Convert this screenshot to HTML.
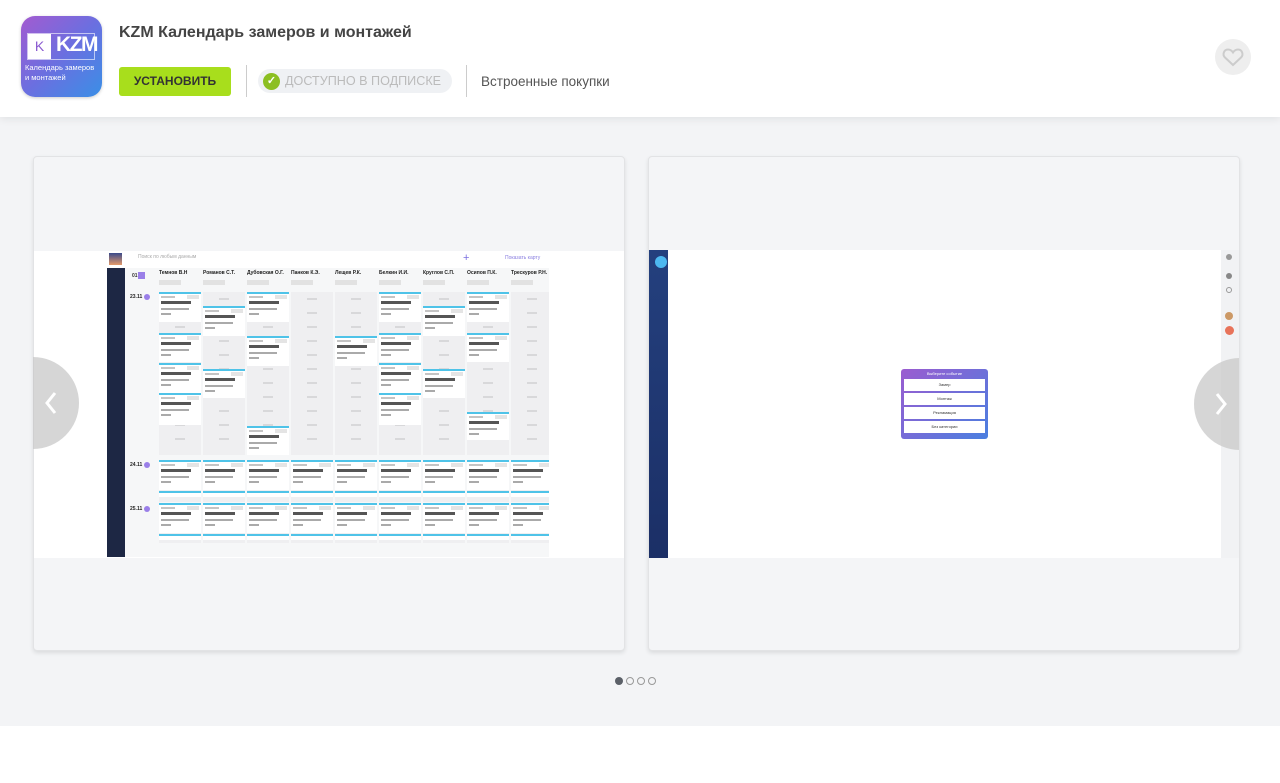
<!DOCTYPE html>
<html><head><meta charset="utf-8">
<style>
*{box-sizing:border-box;margin:0;padding:0}
body{width:1280px;height:783px;position:relative;background:#fff;font-family:"Liberation Sans",sans-serif;overflow:hidden}
.a{position:absolute}
#hdr{left:0;top:0;width:1280px;height:117px;background:#fff;box-shadow:0 2px 8px rgba(0,0,0,.08);z-index:2}
#gray{left:0;top:117px;width:1280px;height:609px;background:#f3f4f6}
.card{background:#f4f5f7;border:1px solid #e2e3e5;border-radius:4px;box-shadow:0 2px 4px rgba(0,0,0,.1);overflow:hidden}
.t{font-size:4px;color:#333;white-space:nowrap}
#cal{position:absolute;left:0;top:0;width:549px;height:783px;overflow:hidden}
</style></head><body>
<div id="gray" class="a"></div>
<div id="hdr" class="a">
  <div class="a" style="left:21px;top:16px;width:81px;height:81px;border-radius:14px;background:linear-gradient(135deg,#a35bd0,#6b6fe0 50%,#3a8fe6);box-shadow:0 1px 3px rgba(0,0,0,.2);overflow:hidden">
    <div class="a" style="left:6px;top:17px;width:68px;height:27px;border:1px solid rgba(255,255,255,.6)"></div>
    <div class="a" style="left:7px;top:18px;width:23px;height:25px;background:#fff;color:#8a5ad0;font-size:14px;text-align:center;line-height:25px">K</div>
    <div class="a" style="left:35px;top:17px;color:#fff;font-size:21px;font-weight:bold;letter-spacing:-1.5px">KZM</div>
    <div class="a" style="left:4px;top:47px;color:#fff;font-size:7.5px;line-height:10px">Календарь замеров<br>и монтажей</div>
  </div>
  <div class="a" style="left:119px;top:24px;font-size:16px;font-weight:bold;color:#444">KZM Календарь замеров и монтажей</div>
  <div class="a" style="left:119px;top:67px;width:112px;height:29px;background:#a8de1c;border-radius:3px;color:#333;font-size:12px;font-weight:bold;text-align:center;line-height:29px">УСТАНОВИТЬ</div>
  <div class="a" style="left:246px;top:65px;width:1px;height:32px;background:#ccc"></div>
  <div class="a" style="left:258px;top:69px;width:194px;height:24px;background:#eff1f4;border-radius:12px"></div>
  <div class="a" style="left:263px;top:73px;width:17px;height:17px;border-radius:50%;background:#8cbf22;color:#fff;font-size:11px;text-align:center;line-height:17px;font-weight:bold">✓</div>
  <div class="a" style="left:285px;top:74px;font-size:12.6px;color:#bbb">ДОСТУПНО В ПОДПИСКЕ</div>
  <div class="a" style="left:466px;top:65px;width:1px;height:32px;background:#ccc"></div>
  <div class="a" style="left:481px;top:74px;font-size:13.5px;color:#555">Встроенные покупки</div>
  <div class="a" style="left:1215px;top:39px;width:36px;height:36px;border-radius:50%;background:#eee">
    <svg width="36" height="36" viewBox="0 0 36 36"><path d="M18 26 L10 18.5 C7 15.5 9 10.5 13 10.5 C15.5 10.5 17 12 18 13.5 C19 12 20.5 10.5 23 10.5 C27 10.5 29 15.5 26 18.5 Z" fill="none" stroke="#ccc" stroke-width="2"/></svg>
  </div>
</div>

<div class="a card" style="left:33px;top:156px;width:592px;height:495px">
  <div class="a" style="left:0;top:94px;width:592px;height:307px;background:#fff"></div>
</div>
<div class="a card" style="left:648px;top:156px;width:592px;height:495px">
  <div class="a" style="left:0;top:93px;width:592px;height:308px;background:#fff"></div>
  <div class="a" style="left:0;top:93px;width:19px;height:308px;background:linear-gradient(#24407e,#1b2f66)"></div>
  <div class="a" style="left:6px;top:99px;width:12px;height:12px;border-radius:50%;background:#4db8f0"></div>
  <div class="a" style="left:572px;top:93px;width:20px;height:308px;background:#f1f2f4"></div>
  <div class="a" style="left:577px;top:97px;width:6px;height:6px;border-radius:50%;background:#999"></div>
  <div class="a" style="left:577px;top:116px;width:6px;height:6px;border-radius:50%;background:#888"></div>
  <div class="a" style="left:577px;top:130px;width:6px;height:6px;border-radius:50%;border:1px solid #999"></div>
  <div class="a" style="left:576px;top:155px;width:8px;height:8px;border-radius:50%;background:#c96"></div>
  <div class="a" style="left:576px;top:169px;width:9px;height:9px;border-radius:50%;background:#e8735a"></div>
  <div class="a" style="left:252px;top:212px;width:87px;height:70px;border-radius:3px;background:linear-gradient(135deg,#9b5cd0,#4a7fe0)">
    <div class="a t" style="left:0;top:2px;width:87px;text-align:center;color:#fff">Выберите событие</div>
    <div class="a t" style="left:3px;top:10px;width:81px;height:12px;background:#fff;text-align:center;line-height:12px">Замер</div>
    <div class="a t" style="left:3px;top:24px;width:81px;height:12px;background:#fff;text-align:center;line-height:12px">Монтаж</div>
    <div class="a t" style="left:3px;top:38px;width:81px;height:12px;background:#fff;text-align:center;line-height:12px">Рекламация</div>
    <div class="a t" style="left:3px;top:52px;width:81px;height:12px;background:#fff;text-align:center;line-height:12px">Без категории</div>
  </div>
  <div class="a" style="left:545px;top:201px;width:92px;height:92px;border-radius:50%;background:rgba(200,200,200,.75)"></div>
  <svg class="a" style="left:562px;top:234px" width="20" height="26"><path d="M6 3 L14 13 L6 23" fill="none" stroke="#fff" stroke-width="3"/></svg>
</div>

<div id="cal"></div>

<div class="a" style="left:33px;top:357px;width:46px;height:92px;overflow:hidden;z-index:3">
  <div class="a" style="left:-46px;top:0;width:92px;height:92px;border-radius:50%;background:rgba(200,200,200,.75)"></div>
  <svg class="a" style="left:8px;top:33px" width="20" height="26"><path d="M14 3 L6 13 L14 23" fill="none" stroke="#fff" stroke-width="3"/></svg>
</div>

<div class="a" style="left:615px;top:677px;width:8px;height:8px;border-radius:50%;background:#5b6068"></div>
<div class="a" style="left:626px;top:677px;width:8px;height:8px;border-radius:50%;border:1px solid #999"></div>
<div class="a" style="left:637px;top:677px;width:8px;height:8px;border-radius:50%;border:1px solid #999"></div>
<div class="a" style="left:648px;top:677px;width:8px;height:8px;border-radius:50%;border:1px solid #999"></div>

<script>
var h='';
function d(x,y,w,hh,s,t){h+='<div class="a" style="left:'+x+'px;top:'+y+'px;width:'+w+'px;height:'+hh+'px;'+s+'">'+(t||'')+'</div>';}
d(107,268,442,289,'background:#f6f7f8');
d(107,268,18,289,'background:#1d2744');
d(109,253,13,12,'background:linear-gradient(#3a4a8a,#e49a6a)');
d(138,254,80,8,'font-size:5px;color:#aaa','Поиск по любым данным');
d(463,254,10,10,'color:#7b6fe0;font-size:11px;line-height:9px','+');
d(505,255,40,8,'font-size:5px;color:#8a7fe0','Показать карту');
d(132,273,6,6,'font-size:5px;color:#333;font-weight:bold','01');
d(138,272,7,7,'background:#9a7fe8');
var names=['Темнов В.Н','Романов С.Т.','Дубовская О.Г.','Панков К.Э.','Лещев Р.К.','Белкин И.И.','Круглов С.П.','Осипов П.К.','Трескуров Р.Н.'];
for(var i=0;i<9;i++){var x=159+i*44;
 d(x,270,42,8,'font-size:5px;font-weight:bold;color:#222',names[i]);
 d(x,280,22,5,'background:#e2e2e2');
 d(x,292,42,163,'background:#efeff1');
 for(var y=298;y<450;y+=14)d(x+16,y,10,2,'background:#d8d8da');
 d(x,460,42,42,'background:#efeff1');
 d(x,503,42,40,'background:#efeff1');
}
var rows=[[[292,322],[333,362],[363,393],[393,425]],[[306,336],[369,398]],[[292,322],[336,366],[426,455]],[],[[336,366]],[[292,322],[333,362],[363,393],[393,425]],[[306,336],[369,398]],[[292,322],[333,362],[412,440]],[]];
function card(x,y,hh){d(x,y,42,hh,'background:#fff;border-top:2px solid #4fc3e8');
 d(x+2,y+4,14,2,'background:#c4c4c4');d(x+28,y+3,12,4,'background:#e4e4e4');
 d(x+2,y+9,30,3,'background:#555');d(x+2,y+16,28,2,'background:#aaa');d(x+2,y+21,10,2,'background:#aaa');}
for(var i=0;i<9;i++){var x=159+i*44;rows[i].forEach(function(r){card(x,r[0],r[1]-r[0]);});
 card(x,460,30);d(x,491,42,6,'background:#fff;border-top:2px solid #4fc3e8');
 card(x,503,30);d(x,534,42,6,'background:#fff;border-top:2px solid #4fc3e8');}
[['23.11',294],['24.11',462],['25.11',506]].forEach(function(r){d(130,r[1],20,6,'font-size:5px;font-weight:bold;color:#222',r[0]);d(144,r[1],6,6,'border-radius:50%;background:#9a7fe8');});
document.getElementById('cal').innerHTML=h;
</script>
</body></html>
